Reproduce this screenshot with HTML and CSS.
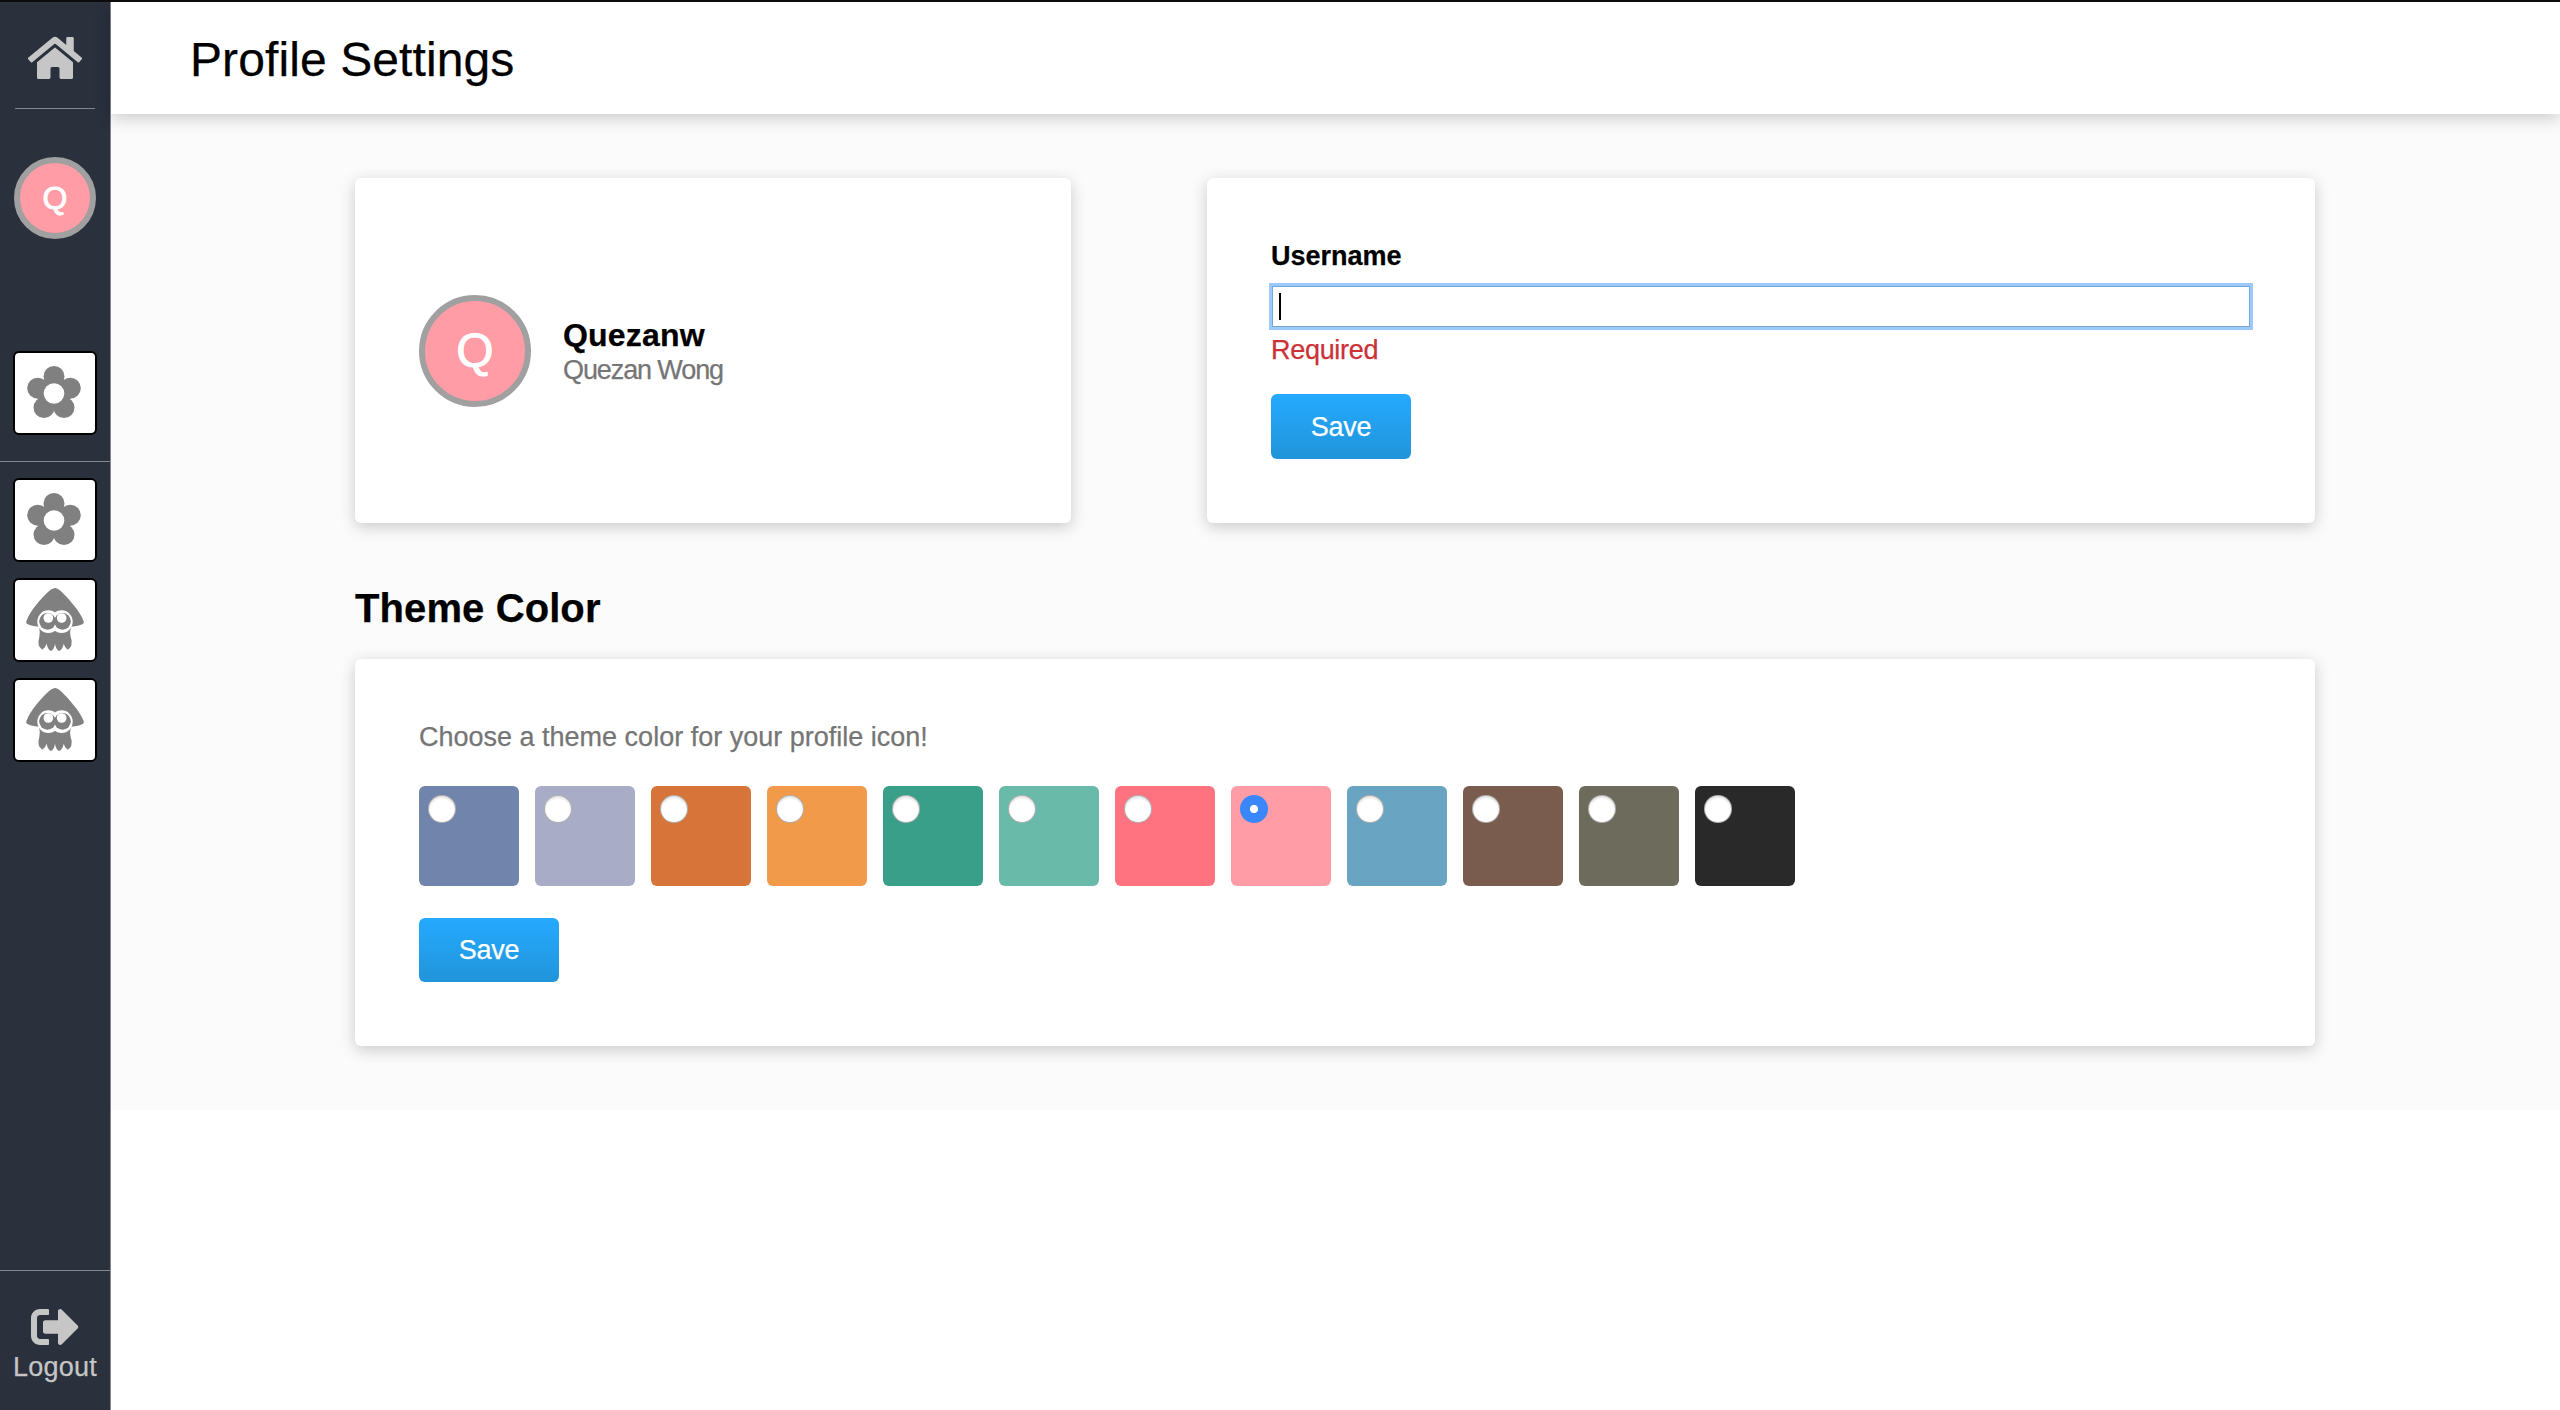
FILE: index.html
```html
<!DOCTYPE html>
<html lang="en">
<head>
<meta charset="utf-8">
<title>Profile Settings</title>
<link rel="stylesheet" href="styles.css">
</head>
<body>
<svg class="defs" aria-hidden="true">
  <symbol id="flower" viewBox="0 0 80 80">
    <g fill="#808080">
      <circle cx="39" cy="23.500" r="10.500"/>
      <circle cx="22.700" cy="35.200" r="10.500"/>
      <circle cx="55.300" cy="35.200" r="10.500"/>
      <circle cx="29" cy="54.600" r="10.500"/>
      <circle cx="49" cy="54.600" r="10.500"/>
      <circle cx="39" cy="40.500" r="17"/>
    </g>
    <circle cx="39" cy="40.500" r="10.300" fill="#fff"/>
  </symbol>
  <symbol id="squid" viewBox="45 61 240 240">
    <path fill="#808080" d="M165 85C174 85 186 97 198 110C220 134 243 162 251 185Q253 191 248 193Q236 199 214 201Q208 215 212 232Q218 246 214 258Q210 266 203 270Q194 264 191 252Q189 268 177 274Q167 268 165 252Q163 268 153 274Q142 268 140 252Q136 264 127 270Q118 264 116 256Q114 244 118 232Q121 215 117 201Q94 199 82 193Q77 191 79 185Q87 162 110 134C128 112 152 85 165 85Z"/>
    <ellipse cx="145" cy="186" rx="33" ry="34" fill="#fff"/>
    <ellipse cx="185" cy="186" rx="33" ry="34" fill="#fff"/>
    <circle cx="142.500" cy="185" r="25" fill="#808080"/>
    <circle cx="187.500" cy="185" r="25" fill="#808080"/>
    <circle cx="145" cy="175" r="14.500" fill="#fff"/>
    <circle cx="185" cy="175" r="14.500" fill="#fff"/>
  </symbol>
</svg>
<div class="app">
  <nav class="sidebar">
    <a class="home"><svg viewBox="0 0 576 512"><path fill="currentColor" d="M280.37 148.26L96 300.11V464a16 16 0 0 0 16 16l112.06-.29a16 16 0 0 0 15.92-16V368a16 16 0 0 1 16-16h64a16 16 0 0 1 16 16v95.64a16 16 0 0 0 16 16.05L464 480a16 16 0 0 0 16-16V300L295.67 148.26a12.19 12.19 0 0 0-15.3 0zM571.6 251.47L488 182.56V44.05a12 12 0 0 0-12-12h-56a12 12 0 0 0-12 12v72.61L318.47 43a48 48 0 0 0-61 0L4.34 251.47a12 12 0 0 0-1.6 16.9l25.5 31A12 12 0 0 0 45.15 301l235.22-193.74a12.19 12.19 0 0 1 15.3 0L530.9 301a12 12 0 0 0 16.9-1.6l25.5-31a12 12 0 0 0-1.7-16.93z"/></svg></a>
    <div class="avatar avatar-small">Q</div>
    <div class="current"><a class="tile"><svg><use href="#flower"/></svg></a></div>
    <div class="tiles">
      <a class="tile"><svg><use href="#flower"/></svg></a>
      <a class="tile"><svg><use href="#squid"/></svg></a>
      <a class="tile"><svg><use href="#squid"/></svg></a>
    </div>
    <a class="logout">
      <svg viewBox="0 0 512 512"><path fill="currentColor" d="M497 273L329 441c-15 15-41 4.500-41-17v-96H152c-13.300 0-24-10.700-24-24v-96c0-13.300 10.700-24 24-24h136V88c0-21.400 25.900-32 41-17l168 168c9.300 9.400 9.300 24.600 0 34zM192 436v-40c0-6.600-5.400-12-12-12H96c-17.700 0-32-14.300-32-32V160c0-17.700 14.300-32 32-32h84c6.600 0 12-5.400 12-12V76c0-6.600-5.400-12-12-12H96c-53 0-96 43-96 96v192c0 53 43 96 96 96h84c6.600 0 12-5.400 12-12z"/></svg>
      <span>Logout</span>
    </a>
  </nav>
  <div class="page">
    <header class="header"><h1>Profile Settings</h1></header>
    <main class="main">
      <div class="top">
        <section class="card profile">
          <div class="avatar avatar-large">Q</div>
          <div>
            <div class="name">Quezanw</div>
            <div class="full-name">Quezan Wong</div>
          </div>
        </section>
        <form class="card username">
          <label class="label">Username</label>
          <div class="input"><span class="caret"></span></div>
          <div class="error">Required</div>
          <button class="save" type="button">Save</button>
        </form>
      </div>
      <h2>Theme Color</h2>
      <form class="card theme">
        <p class="hint">Choose a theme color for your profile icon!</p>
        <div class="swatches">
          <label class="swatch c1"><span class="radio"></span></label>
          <label class="swatch c2"><span class="radio"></span></label>
          <label class="swatch c3"><span class="radio"></span></label>
          <label class="swatch c4"><span class="radio"></span></label>
          <label class="swatch c5"><span class="radio"></span></label>
          <label class="swatch c6"><span class="radio"></span></label>
          <label class="swatch c7"><span class="radio"></span></label>
          <label class="swatch c8"><span class="radio checked"></span></label>
          <label class="swatch c9"><span class="radio"></span></label>
          <label class="swatch c10"><span class="radio"></span></label>
          <label class="swatch c11"><span class="radio"></span></label>
          <label class="swatch c12"><span class="radio"></span></label>
        </div>
        <button class="save save-theme" type="button">Save</button>
      </form>
    </main>
  </div>
</div>
</body>
</html>
```
FILE: styles.css
```css
* { box-sizing: border-box; }
body {
  margin: 0;
  background: #fff;
  color: #000;
  font: 27px/32px "Liberation Sans", Arial, sans-serif;
  -webkit-text-stroke: 0.25px;
}
h1, h2, p { margin: 0; }
svg { display: block; }
.defs { position: absolute; width: 0; height: 0; }

.app {
  display: flex;
  height: 1410px;
  border-top: 2px solid #0c0c0c;
}

/* Sidebar */
.sidebar {
  display: flex;
  flex-direction: column;
  align-items: center;
  width: 111px;
  flex: none;
  background: #2a303c;
  border-right: 1px solid #84878e;
  color: #c6c6c6;
}
.home {
  width: 80px;
  height: 107px;
  padding: 32px 13px 0;
  border-bottom: 1px solid #84878e;
}
.home svg { width: 54px; height: 48px; }
.avatar {
  display: flex;
  align-items: center;
  justify-content: center;
  flex: none;
  border: 6px solid #a0a0a0;
  border-radius: 50%;
  background: #ff9ca5;
  color: #fff;
  -webkit-text-stroke: 0.9px;
}
.avatar-small {
  width: 82px;
  height: 82px;
  margin-top: 48px;
  font-size: 32px;
}
.current {
  display: flex;
  justify-content: center;
  width: 110px;
  margin-top: 112px;
  padding-bottom: 26px;
  border-bottom: 1px solid #84878e;
}
.tiles {
  display: flex;
  flex-direction: column;
  gap: 16px;
  margin-top: 16px;
}
.tile {
  width: 84px;
  height: 84px;
  border: 2px solid #000;
  border-radius: 6px;
  background: #fff;
}
.tile svg { width: 80px; height: 80px; }
.logout {
  display: flex;
  flex-direction: column;
  align-items: center;
  width: 110px;
  height: 140px;
  margin-top: auto;
  padding-top: 32px;
  border-top: 1px solid #84878e;
  letter-spacing: 0.2px;
}
.logout svg { width: 48px; height: 48px; }

/* Page */
.page { flex: 1; }
.header {
  position: relative;
  height: 112px;
  padding: 30px 0 0 79px;
  background: #fff;
  box-shadow: 0 4px 16px rgba(0, 0, 0, 0.2);
}
h1 { font-size: 48px; line-height: 56px; font-weight: 400; letter-spacing: 0.1px; }
.main {
  height: 996px;
  padding: 64px 245px 64px 244px;
  background: #fbfbfb;
}
.top {
  display: grid;
  grid-template-columns: 716px 1108px;
  justify-content: space-between;
  height: 345px;
}
.card {
  padding: 64px;
  border-radius: 6px;
  background: #fff;
  box-shadow: 0 4px 16px rgba(0, 0, 0, 0.2);
}
.profile { display: flex; align-items: center; gap: 32px; }
.avatar-large { width: 112px; height: 112px; font-size: 48px; }
.name { padding-top: 1px; font-size: 32px; line-height: 38px; font-weight: 700; letter-spacing: 0.2px; }
.full-name { color: #757575; letter-spacing: -1.1px; }

.label { display: block; height: 30px; line-height: 28px; font-weight: 700; }
.input {
  width: 978px;
  height: 41px;
  margin: 14px 0 0 1px;
  padding: 6px;
  border: 1px solid #7aa5d6;
  box-shadow: 0 0 0 3px #9dcafd;
}
.caret { display: block; width: 2px; height: 27px; background: #000; }
.error { margin-top: 7px; color: #cb3137; letter-spacing: -0.3px; }
.save {
  display: block;
  width: 140px;
  height: 65px;
  margin-top: 28px;
  padding: 0;
  border: 0;
  border-radius: 6px;
  background: linear-gradient(#25aaff, #2194da);
  color: #fff;
  font: inherit;
  letter-spacing: -0.2px;
}

h2 { height: 136px; padding-top: 62px; font-size: 40px; line-height: 46px; letter-spacing: 0.1px; }
.theme { height: 387px; }
.hint { height: 32px; line-height: 28px; color: #757575; }
.swatches { display: flex; gap: 16px; margin-top: 31px; }
.swatch {
  width: 100px;
  height: 100px;
  padding: 9px;
  border-radius: 6px;
}
.radio {
  display: block;
  width: 28px;
  height: 28px;
  border: 1px solid rgba(150, 150, 150, 0.75);
  border-radius: 50%;
  background: #fff;
  box-shadow: inset 0 2px 2px rgba(0, 0, 0, 0.1);
}
.checked {
  border: 0;
  background: radial-gradient(circle, #fff 3.7px, #3a87fc 4.5px);
  box-shadow: none;
}
.save-theme { height: 64px; margin-top: 32px; }
.c1 { background: #7184ac; }
.c2 { background: #a9acc7; }
.c3 { background: #d77439; }
.c4 { background: #f19a4a; }
.c5 { background: #399f88; }
.c6 { background: #6abaa9; }
.c7 { background: #ff7380; }
.c8 { background: #ff9ca5; }
.c9 { background: #69a5c3; }
.c10 { background: #7a5c4f; }
.c11 { background: #6d6b5b; }
.c12 { background: #292929; }
```
